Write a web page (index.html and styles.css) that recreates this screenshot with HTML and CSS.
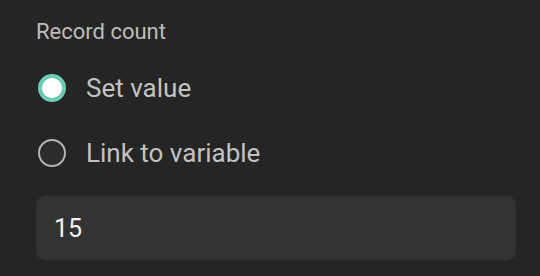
FILE: index.html
```html
<!DOCTYPE html>
<html>
<head>
<meta charset="utf-8">
<link rel="stylesheet" href="styles.css">
</head>
<body>
<div class="panel">
  <div class="label">Record count</div>
  <div class="options">
    <label class="option">
      <span class="radio checked"></span>
      <span class="option-text">Set value</span>
    </label>
    <label class="option">
      <span class="radio"></span>
      <span class="option-text">Link to variable</span>
    </label>
  </div>
  <div class="field">15</div>
</div>
</body>
</html>
```

FILE: styles.css
```css
html, body {
  margin: 0;
  padding: 0;
  background: #252525;
}
body {
  width: 540px;
  height: 276px;
  overflow: hidden;
  font-family: Roboto, "Liberation Sans", sans-serif;
}
.panel {
  padding: 17px 24px 0 36px;
  display: flex;
  flex-direction: column;
}
.label {
  font-size: 22px;
  line-height: 30px;
  color: #bdbdbd;
}
.options {
  display: flex;
  flex-direction: column;
  gap: 33px;
  margin-top: 25px;
}
.option {
  display: flex;
  align-items: center;
  height: 32px;
}
.radio {
  box-sizing: border-box;
  width: 28px;
  height: 28px;
  border-radius: 50%;
  border: 2px solid #b4b4b4;
  background: #2c2c2c;
  margin-left: 2px;
  flex: none;
}
.radio.checked {
  border: 4px solid #6ccbb3;
  background: #ffffff;
}
.option-text {
  margin-left: 20px;
  font-size: 26px;
  color: #c2c2c2;
}
.field {
  margin-top: 27px;
  height: 64px;
  width: 480px;
  box-sizing: border-box;
  border-radius: 9px;
  background: #333333;
  padding-left: 18px;
  display: flex;
  align-items: center;
  font-size: 25px;
  color: #f2f2f2;
}
```
